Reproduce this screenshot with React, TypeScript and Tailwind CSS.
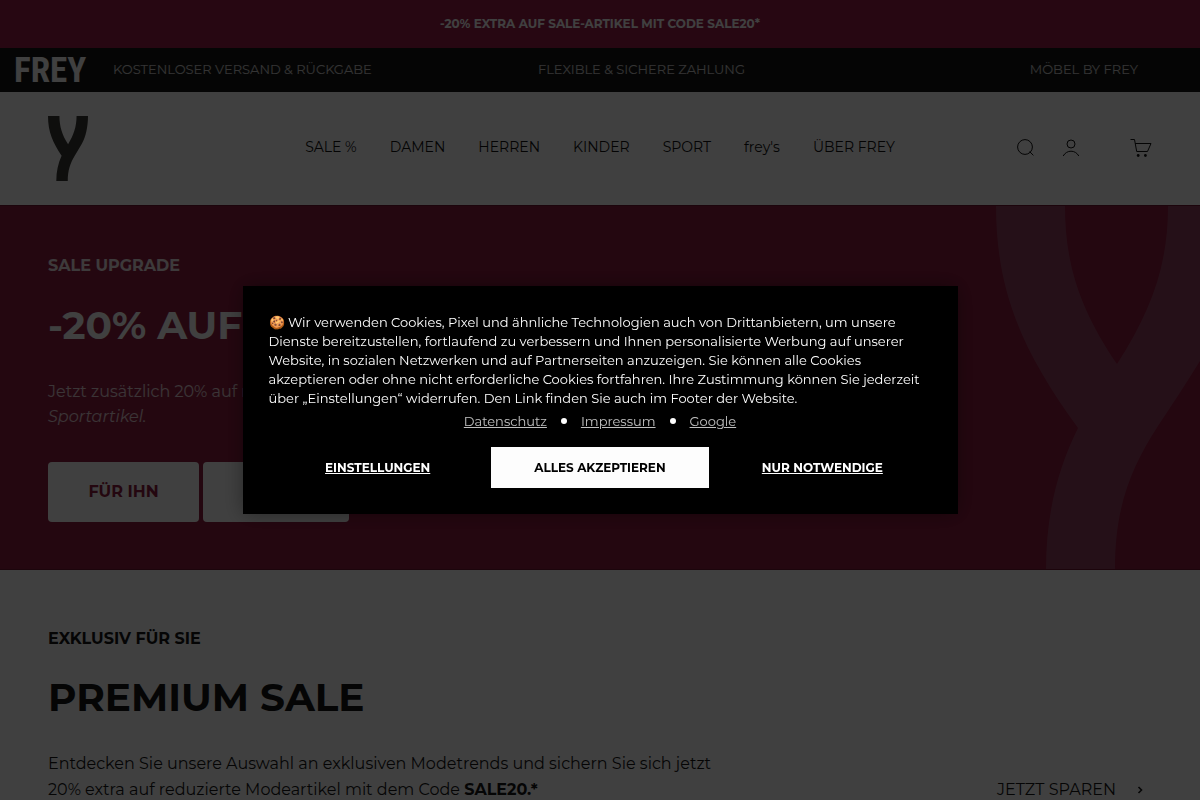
import type { ReactNode } from "react";

const navItems = ["SALE %", "DAMEN", "HERREN", "KINDER", "SPORT", "frey's", "ÜBER FREY"];

function BrandMark({ className }: { className: string }) {
  return (
    <svg viewBox="0 0 241 363" preserveAspectRatio="none" className={className} fill="currentColor" aria-hidden="true">
      <path d="M0 0H69C69 60 85 105 121 158C155 105 172 60 172 0H241C241 60 228 115 204 155C190 178 175 200 162 220C135 262 119 300 119 363H50C50 310 61 264 82 222C30 150 0 90 0 0Z" />
    </svg>
  );
}

function IconButton({ label, children }: { label: string; children: ReactNode }) {
  return (
    <button type="button" aria-label={label} className="flex h-6 w-6 items-center justify-center">
      {children}
    </button>
  );
}

function TopBars() {
  return (
    <>
      <div className="flex h-12 items-center justify-center bg-[#9c1f49] text-[12px] font-bold text-white">
        <a href="#sale">-20% EXTRA AUF SALE-ARTIKEL MIT CODE SALE20*</a>
      </div>
      <div className="flex h-11 items-center bg-[#161616] pr-[62px] pl-[14px] text-[13px] text-white/80">
        <a
          href="#home"
          className="w-[99px] shrink-0 font-['Roboto_Condensed','Liberation_Sans_Narrow','Roboto',sans-serif] text-[35px] leading-none font-bold text-white"
        >
          FREY
        </a>
        <div className="grid flex-1 grid-cols-[1fr_auto_1fr]">
          <a href="#versand">KOSTENLOSER VERSAND &amp; RÜCKGABE</a>
          <a href="#zahlung" className="pl-8">FLEXIBLE &amp; SICHERE ZAHLUNG</a>
          <a href="#moebel" className="text-right">MÖBEL BY FREY</a>
        </div>
      </div>
    </>
  );
}

function Header() {
  return (
    <header className="flex h-[113px] items-center justify-between bg-white px-12 text-[#111]">
      <a href="#home" aria-label="FREY" className="w-[138px]">
        <BrandMark className="h-[65px] w-10 text-[#3a3a36]" />
      </a>
      <nav className="flex gap-[33px] pb-[2px] text-[14px]">
        {navItems.map((item) => (
          <a key={item} href="#nav">{item}</a>
        ))}
      </nav>
      <div className="flex w-[138px] items-center pb-px">
        <IconButton label="Suche">
          <svg viewBox="0 0 20 20" className="h-5 w-5" fill="none" stroke="currentColor" strokeWidth="1">
            <circle cx="9" cy="9" r="7.4" />
            <path d="M13.6 13.6L17.4 17.4" />
          </svg>
        </IconButton>
        <div className="ml-[21px]">
          <IconButton label="Konto">
            <svg viewBox="0 0 20 20" className="h-5 w-5" fill="none" stroke="currentColor" strokeWidth="1">
              <circle cx="10" cy="6" r="4" />
              <path d="M2.2 18C5.6 11.6 14.4 11.6 17.8 18" />
            </svg>
          </IconButton>
        </div>
        <div className="ml-auto">
          <IconButton label="Warenkorb">
            <svg viewBox="0 0 24 22" className="h-[22px] w-6" fill="none" stroke="currentColor" strokeWidth="1">
              <path d="M2.5 2.5H6.5L8.7 14.5H19.5L23 6.5H7.2" strokeLinejoin="round" />
              <circle cx="10.2" cy="18.5" r="1.4" fill="currentColor" stroke="none" />
              <circle cx="17.4" cy="18.5" r="1.4" fill="currentColor" stroke="none" />
            </svg>
          </IconButton>
        </div>
      </div>
    </header>
  );
}

function Hero() {
  return (
    <section className="relative h-[365px] overflow-hidden border-y border-[#701632] bg-[#901c40] px-12 pt-12 text-white">
      <BrandMark className="absolute top-0 right-[-37px] h-full w-[241px] text-[#944260]" />
      <p className="text-[16px] leading-6 font-bold text-white/90">SALE UPGRADE</p>
      <h1 className="mt-5 text-[39px] leading-[54px] font-bold">-20% AUF</h1>
      <p className="mt-[27px] text-[16px] leading-[25px] text-white/80">
        Jetzt zusätzlich 20% auf reduzierte
        <br />
        <em>Sportartikel.</em>
      </p>
      <div className="mt-[33px] flex gap-1 text-[16px] font-bold text-[#901c40]">
        <a href="#herren" className="flex h-[60px] w-[151px] items-center justify-center rounded bg-white">FÜR IHN</a>
        <a href="#damen" className="flex h-[60px] w-[146px] items-center justify-center rounded bg-white">FÜR SIE</a>
      </div>
    </section>
  );
}

function PremiumSale() {
  return (
    <section className="bg-white px-12 pt-[57px] text-[#161616]">
      <p className="text-[16px] leading-6 font-bold">EXKLUSIV FÜR SIE</p>
      <h2 className="mt-[19px] text-[39px] leading-[54px] font-bold">PREMIUM SALE</h2>
      <div className="mt-[27px] flex items-end justify-between text-[16px] leading-[26px]">
        <p>
          Entdecken Sie unsere Auswahl an exklusiven Modetrends und sichern Sie sich jetzt
          <br />
          20% extra auf reduzierte Modeartikel mit dem Code <strong>SALE20.*</strong>
        </p>
        <a href="#sparen" className="flex items-center gap-5 pr-2">
          JETZT SPAREN
          <svg viewBox="0 0 8 8" className="h-2 w-2" fill="none" stroke="currentColor" strokeWidth="1.6">
            <path d="M2.5 1L5.5 4L2.5 7" />
          </svg>
        </a>
      </div>
    </section>
  );
}

function CookieDialog() {
  return (
    <div className="fixed inset-0 flex items-center justify-center bg-black/75">
      <div
        role="dialog"
        aria-label="Cookies"
        className="w-[715px] bg-black px-[26px] pt-[27px] pb-[26px] text-white shadow-[0_0_20px_rgba(0,0,0,0.4)]"
      >
        <p className="text-[13px] leading-[19px]">
          🍪 Wir verwenden Cookies, Pixel und ähnliche Technologien auch von Drittanbietern, um unsere
          <br />
          Dienste bereitzustellen, fortlaufend zu verbessern und Ihnen personalisierte Werbung auf unserer
          <br />
          Website, in sozialen Netzwerken und auf Partnerseiten anzuzeigen. Sie können alle Cookies
          <br />
          akzeptieren oder ohne nicht erforderliche Cookies fortfahren. Ihre Zustimmung können Sie jederzeit
          <br />
          über „Einstellungen“ widerrufen. Den Link finden Sie auch im Footer der Website.
        </p>
        <div className="mt-[3px] flex items-center justify-center gap-[14px] text-[13px] leading-[20px]">
          <a href="#datenschutz" className="text-white/75 underline">Datenschutz</a>
          <span className="h-[6px] w-[6px] rounded-full bg-white" />
          <a href="#impressum" className="text-white/75 underline">Impressum</a>
          <span className="h-[6px] w-[6px] rounded-full bg-white" />
          <a href="#google" className="text-white/75 underline">Google</a>
        </div>
        <div className="mt-4 grid grid-cols-3 gap-1 text-[12px] font-bold">
          <button type="button" className="underline">EINSTELLUNGEN</button>
          <button type="button" className="h-[41px] bg-[#fdfdfd] text-black">ALLES AKZEPTIEREN</button>
          <button type="button" className="underline">NUR NOTWENDIGE</button>
        </div>
      </div>
    </div>
  );
}

export default function App() {
  return (
    <div className="h-screen overflow-hidden bg-white font-['Montserrat','Inter',sans-serif]">
      <TopBars />
      <Header />
      <main>
        <Hero />
        <PremiumSale />
      </main>
      <CookieDialog />
    </div>
  );
}
